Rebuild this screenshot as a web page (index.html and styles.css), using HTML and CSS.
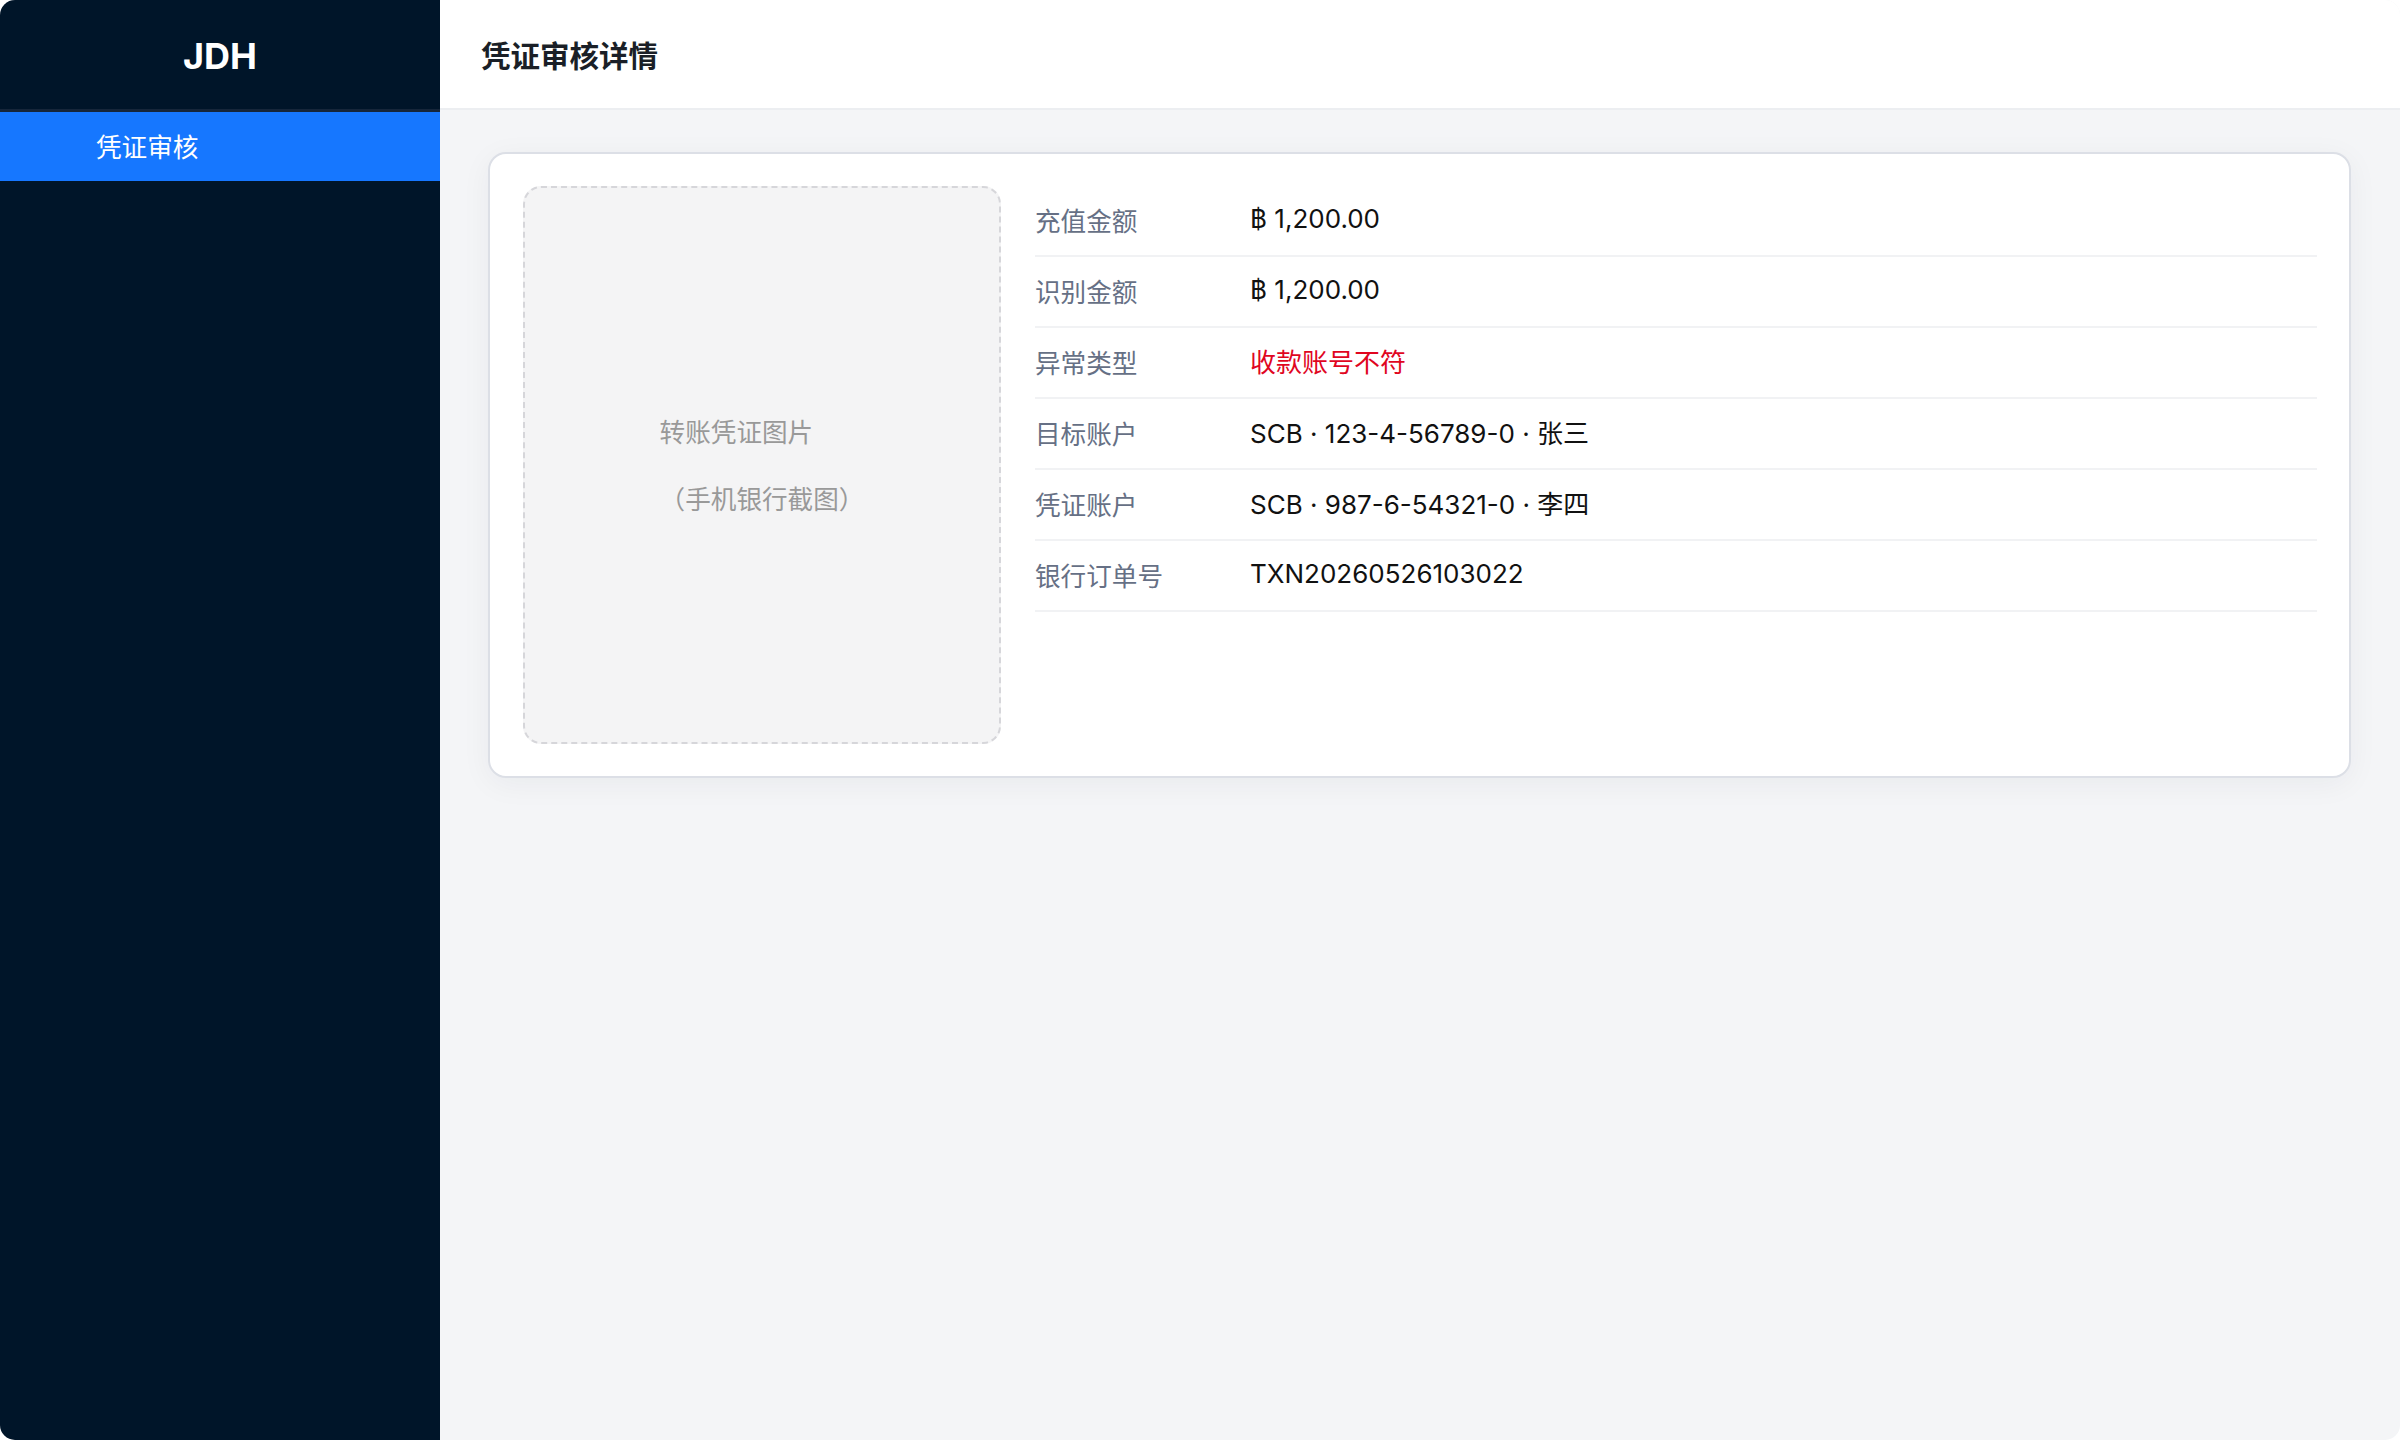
FILE: index.html
```html
<!DOCTYPE html>
<html lang="zh">
    <head>
        <meta charset="UTF-8" />
        <meta name="viewport" content="width=device-width, initial-scale=1.0" />
        <title>凭证审核详情</title>
        <link rel="stylesheet" href="styles.css">
    </head>
    <body>
        <div class="app">
            <!-- 左侧导航 -->
            <aside class="sider">
                <div class="logo">JDH</div>
                <ul class="menu">
                    <li class="menu-item current">凭证审核</li>
                </ul>
            </aside>

            <div class="main">
                <header class="header">凭证审核详情</header>

                <div class="content">
                    <div class="card">
                        <!-- 凭证图片占位 -->
                        <div class="voucher">
                            <div class="voucher-tip">
                                <div>转账凭证图片</div>
                                <div>（手机银行截图）</div>
                            </div>
                        </div>

                        <!-- 详情字段 -->
                        <ul class="info">
                            <li><span class="label">充值金额</span><span class="value">฿ 1,200.00</span></li>
                            <li><span class="label">识别金额</span><span class="value">฿ 1,200.00</span></li>
                            <li><span class="label">异常类型</span><span class="value danger">收款账号不符</span></li>
                            <li><span class="label">目标账户</span><span class="value">SCB · 123-4-56789-0 · 张三</span></li>
                            <li><span class="label">凭证账户</span><span class="value">SCB · 987-6-54321-0 · 李四</span></li>
                            <li><span class="label">银行订单号</span><span class="value">TXN20260526103022</span></li>
                        </ul>
                    </div>
                </div>
            </div>
        </div>
    </body>
</html>
```

FILE: styles.css
```css
* {
    margin: 0;
    padding: 0;
    box-sizing: border-box;
}

ul {
    list-style: none;
}

body {
    background-color: #fff;
    font-family: Inter, "Noto Sans CJK SC", sans-serif;
}

.app {
    display: flex;
    height: 100vh;
    border-radius: 15px;
    overflow: hidden;
}

/* 侧边栏 */
.sider {
    width: 440px;
    flex-shrink: 0;
    background-color: #001529;
}

.logo {
    height: 112px;
    padding-top: 3px;
    border-bottom: 3px solid #16263a;
    display: flex;
    justify-content: center;
    align-items: center;
    color: #fff;
    font-size: 36px;
    font-weight: 700;
}

.menu-item {
    height: 69px;
    padding-left: 96px;
    padding-bottom: 2px;
    display: flex;
    align-items: center;
    color: #fff;
    font-size: 25.6px;
    cursor: pointer;
}

.menu-item.current {
    background-color: #1677ff;
}

/* 右侧主体 */
.main {
    flex: 1;
    display: flex;
    flex-direction: column;
    background-color: #f4f5f7;
}

.header {
    height: 110px;
    padding-left: 41px;
    display: flex;
    align-items: center;
    background-color: #fff;
    border-bottom: 2px solid #eceef1;
    color: #1a1f27;
    font-size: 29.5px;
    font-weight: 700;
}

.content {
    padding: 42px 49px 0 48px;
}

.card {
    display: flex;
    gap: 34px;
    padding: 32px 32px 32px 33px;
    background-color: #fff;
    border: 2px solid #dcdfe6;
    border-radius: 18px;
    box-shadow: 0 6px 30px rgba(20, 30, 60, .05);
}

.voucher {
    width: 478px;
    height: 558px;
    flex-shrink: 0;
    display: flex;
    justify-content: center;
    align-items: center;
    background-color: #f4f4f5;
    border: 2px dashed #d6d6da;
    border-radius: 18px;
}

.voucher-tip {
    padding-top: 2px;
    color: #999;
    font-size: 25.6px;
    line-height: 67px;
}

.info {
    flex: 1;
}

.info li {
    height: 71px;
    display: flex;
    align-items: center;
    border-bottom: 2px solid #f1f2f4;
    font-size: 25.6px;
}

.info .label {
    width: 215px;
    flex-shrink: 0;
    margin-bottom: 2px;
    color: #667085;
}

.info .value {
    margin-bottom: 5px;
    color: #111;
    font-size: 26px;
}

.info .danger {
    color: #e0061f;
}
```
